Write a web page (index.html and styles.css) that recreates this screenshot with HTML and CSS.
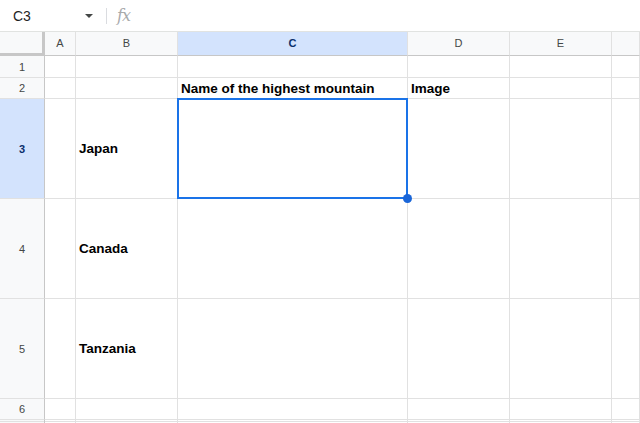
FILE: index.html
```html
<!DOCTYPE html>
<html>
<head>
<meta charset="utf-8">
<link rel="stylesheet" href="styles.css">
</head>
<body>
<div class="topbar">
  <div class="namebox"><span class="ref">C3</span><span class="caret"></span></div>
  <div class="sep"></div>
  <div class="fx">fx</div>
</div>
<div class="sheet">
  <div class="corner"></div>
  <div class="ch">A</div>
  <div class="ch">B</div>
  <div class="ch sel">C</div>
  <div class="ch">D</div>
  <div class="ch">E</div>
  <div class="ch"></div>

  <div class="rh">1</div>
  <div class="c"></div><div class="c"></div><div class="c"></div><div class="c"></div><div class="c"></div><div class="c"></div>

  <div class="rh">2</div>
  <div class="c"></div><div class="c"></div>
  <div class="c b bottom">Name of the highest mountain</div>
  <div class="c b bottom">Image</div>
  <div class="c"></div><div class="c"></div>

  <div class="rh sel">3</div>
  <div class="c"></div>
  <div class="c b mid">Japan</div>
  <div class="c active"><div class="selbox"><span class="handle"></span></div></div>
  <div class="c"></div><div class="c"></div><div class="c"></div>

  <div class="rh">4</div>
  <div class="c"></div>
  <div class="c b mid">Canada</div>
  <div class="c"></div><div class="c"></div><div class="c"></div><div class="c"></div>

  <div class="rh">5</div>
  <div class="c"></div>
  <div class="c b mid">Tanzania</div>
  <div class="c"></div><div class="c"></div><div class="c"></div><div class="c"></div>

  <div class="rh">6</div>
  <div class="c"></div><div class="c"></div><div class="c"></div><div class="c"></div><div class="c"></div><div class="c"></div>

  <div class="rh tail"></div>
  <div class="c tail"></div><div class="c tail"></div><div class="c tail"></div><div class="c tail"></div><div class="c tail"></div><div class="c tail"></div>
</div>
</body>
</html>
```

FILE: styles.css
```css
* { box-sizing: border-box; }
html, body { margin: 0; padding: 0; }
body {
  width: 640px;
  height: 423px;
  overflow: hidden;
  background: #ffffff;
  font-family: "Liberation Sans", Arial, sans-serif;
  color: #000;
}
.topbar {
  height: 32px;
  border-bottom: 1px solid #e1e3e1;
  display: flex;
  align-items: center;
}
.namebox {
  width: 106px;
  display: flex;
  align-items: center;
  padding-left: 13px;
  padding-right: 12px;
  justify-content: space-between;
}
.ref { font-size: 14px; color: #1f1f1f; }
.caret {
  width: 0; height: 0;
  border-left: 4px solid transparent;
  border-right: 4px solid transparent;
  border-top: 4px solid #444746;
  margin-right: 1px;
}
.sep { width: 1px; height: 16px; background: #dadce0; }
.fx {
  margin-left: 10px;
  font-family: "DejaVu Serif", "Liberation Serif", serif;
  font-style: italic;
  font-size: 16px;
  color: #a8aaac;
  letter-spacing: -1px;
}
.sheet {
  display: grid;
  grid-template-columns: 45px 31px 102px 230px 102px 102px 1fr;
  grid-template-rows: 24px 22px 21px 100px 100px 100px 21px 1fr;
  height: 391px;
}
.corner {
  background: #f8f9fa;
  border-right: 3px solid #c7c7c7;
  border-bottom: 3px solid #c7c7c7;
}
.ch {
  background: #f8f9fa;
  border-right: 1px solid #e1e1e1;
  border-bottom: 1px solid #c7c7c7;
  font-size: 11px;
  color: #444746;
  display: flex;
  align-items: center;
  justify-content: center;
  padding-bottom: 1px;
}
.ch.sel, .rh.sel {
  background: #d3e3fd;
  color: #0b2f6b;
  font-weight: bold;
}
.rh {
  background: #f8f9fa;
  border-right: 1px solid #c7c7c7;
  border-bottom: 1px solid #e1e1e1;
  font-size: 11px;
  color: #444746;
  display: flex;
  align-items: center;
  justify-content: center;
}
.c {
  border-right: 1px solid #e1e1e1;
  border-bottom: 1px solid #e1e1e1;
  font-size: 13.5px;
  padding-left: 3px;
  display: flex;
  white-space: nowrap;
}
.b { font-weight: bold; color: #000; }
.bottom { align-items: flex-end; padding-bottom: 2px; }
.mid { align-items: center; padding-bottom: 1px; }
.tail { border-bottom: none; background-image: linear-gradient(to bottom, transparent 1px, #e1e1e1 1px, #e1e1e1 2px, transparent 2px); }
.rh.tail { background-color: #f8f9fa; }
.active { position: relative; padding: 0; }
.selbox {
  position: absolute;
  left: -1px;
  top: -1px;
  right: -1px;
  bottom: -1px;
  border: 2px solid #1a73e8;
}
.handle {
  position: absolute;
  right: -6px;
  bottom: -6px;
  width: 9px;
  height: 9px;
  border-radius: 50%;
  background: #1a66d8;
}
```
